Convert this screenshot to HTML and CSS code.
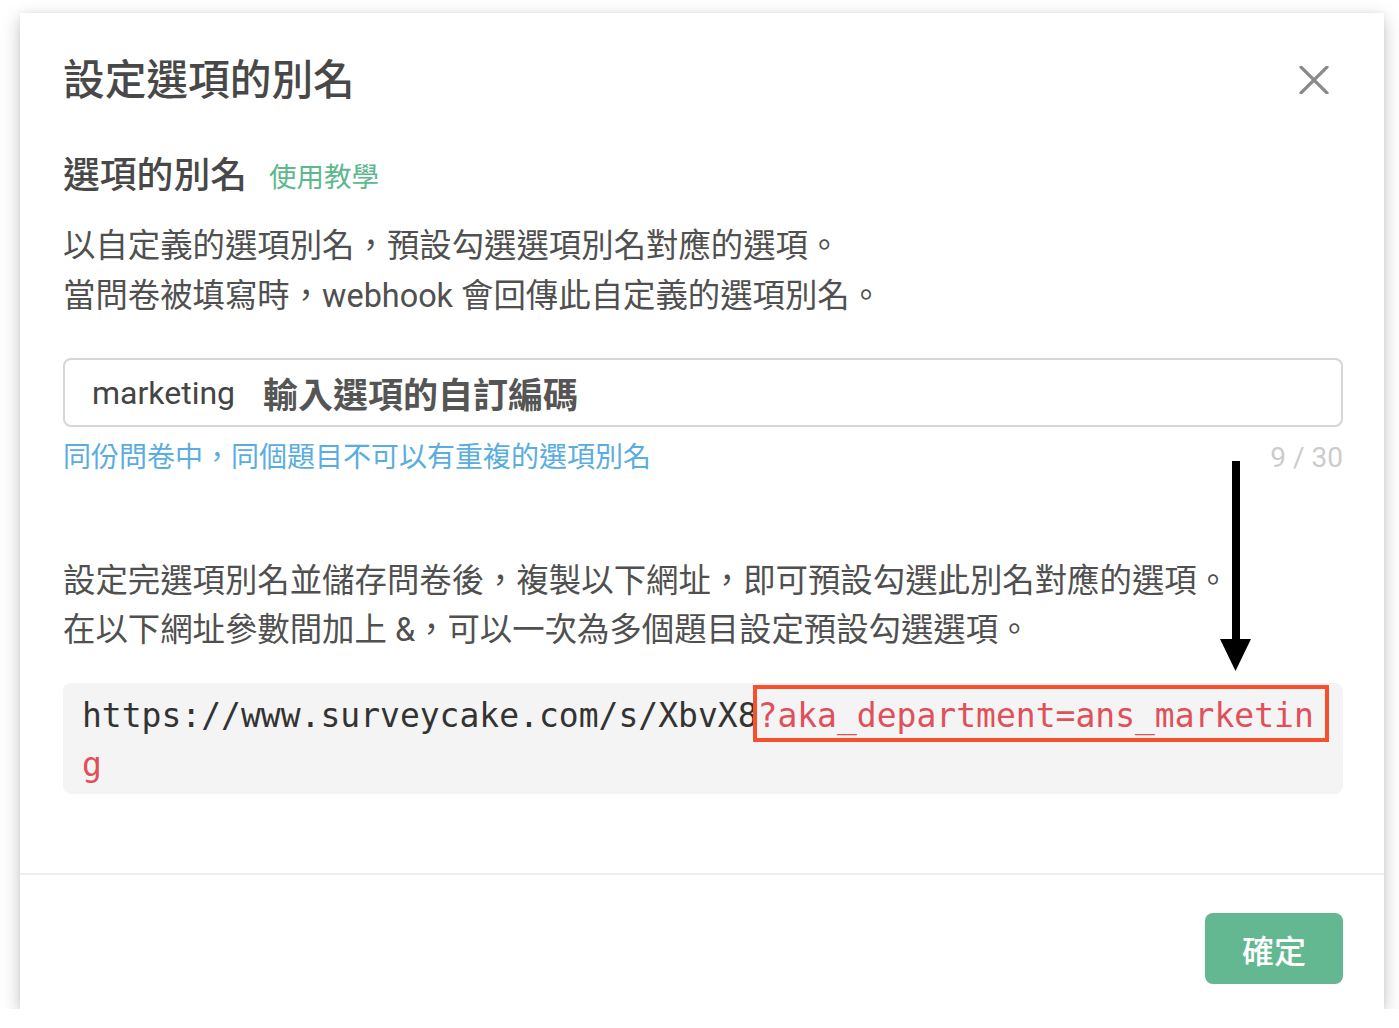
FILE: index.html
```html
<!DOCTYPE html>
<html lang="zh-Hant">
<head>
<meta charset="utf-8">
<link rel="stylesheet" href="styles.css">
</head>
<body>
<div class="modal">
  <div class="modal-body">
    <div class="header">
      <h1 class="title">設定選項的別名</h1>
      <button class="close" aria-label="close">
        <svg width="30" height="28" viewBox="0 0 30 28"><path d="M2 1 L28 27 M28 1 L2 27" stroke="#8a8a8a" stroke-width="3.2" stroke-linecap="round" fill="none"/></svg>
      </button>
    </div>
    <div class="subtitle">選項的別名<a class="tutorial">使用教學</a></div>
    <p class="desc">以自定義的選項別名，預設勾選選項別名對應的選項。<br>當問卷被填寫時，webhook 會回傳此自定義的選項別名。</p>
    <div class="input"><span class="value">marketing</span><span class="note">輸入選項的自訂編碼</span></div>
    <div class="hint-row"><span class="hint">同份問卷中，同個題目不可以有重複的選項別名</span><span class="count">9 / 30</span></div>
    <p class="desc desc2">設定完選項別名並儲存問卷後，複製以下網址，即可預設勾選此別名對應的選項。<br>在以下網址參數間加上 &amp;，可以一次為多個題目設定預設勾選選項。</p>
    <div class="code"><span class="base">https://www.surveycake.com/s/XbvX8</span><span class="param">?aka_department=ans_marketin</span><span class="param">g</span><div class="highlight"></div></div>
    <svg class="arrow" width="32" height="210" viewBox="0 0 32 210"><rect x="12" y="0" width="8" height="182" fill="#000"/><path d="M0 178 L31 178 L15.5 210 Z" fill="#000"/></svg>
  </div>
  <div class="footer">
    <button class="ok">確定</button>
  </div>
</div>
</body>
</html>
```
FILE: styles.css
```css
html, body {
  margin: 0;
  padding: 0;
  background: #ffffff;
}
body {
  font-family: Roboto, "Noto Sans CJK TC", "Noto Sans", sans-serif;
  color: #4a4a4a;
}
.modal {
  margin: 13px 0 0 20px;
  width: 1364px;
  background: #fff;
  box-shadow: 0 6px 18px rgba(0,0,0,0.22), 0 0 6px rgba(0,0,0,0.06);
}
.modal-body {
  position: relative;
  padding: 40px 41px 79px 43px;
  border-bottom: 2px solid #eeeeee;
}
.header {
  display: flex;
  justify-content: space-between;
  align-items: center;
}
.title {
  margin: 0;
  font-size: 41.7px;
  line-height: 56px;
  font-weight: 500;
  color: #484848;
}
.close {
  border: 0;
  background: none;
  padding: 0;
  margin-right: 14px;
  margin-top: -2px;
  display: flex;
}
.subtitle {
  margin-top: 40px;
  font-size: 36.8px;
  line-height: 50px;
  font-weight: 500;
  color: #484848;
  display: flex;
  align-items: center;
}
.tutorial {
  margin-left: 22px;
  font-size: 27.5px;
  color: #5db88e;
  font-weight: 400;
  padding-top: 4px;
}
.desc {
  margin: 18px 0 0;
  font-size: 32.4px;
  line-height: 50px;
  color: #505050;
}
.input {
  margin-top: 37px;
  height: 65px;
  border: 2px solid #d6d6d6;
  border-radius: 8px;
  display: flex;
  align-items: center;
  padding: 0 28px 0 27px;
}
.value {
  font-size: 32px;
  color: #444;
}
.note {
  margin-left: 28px;
  font-size: 35px;
  font-weight: 700;
  color: #555;
}
.hint-row {
  margin-top: 11px;
  display: flex;
  justify-content: space-between;
  font-size: 28px;
  line-height: 40px;
}
.hint { color: #5aade0; }
.count { color: #cccccc; }
.desc2 {
  margin-top: 79px;
  line-height: 49px;
}
.code {
  position: relative;
  margin-top: 28px;
  background: #f4f4f4;
  border-radius: 8px;
  padding: 8px 19px 5px 19px;
  font-family: "DejaVu Sans Mono", monospace;
  font-size: 33px;
  line-height: 49px;
  color: #333;
  word-break: break-all;
}
.param { color: #e0505a; }
.highlight {
  position: absolute;
  left: 690px;
  top: 2px;
  width: 568px;
  height: 49px;
  border: 4px solid #f7502c;
}
.arrow {
  position: absolute;
  left: 1200px;
  top: 448px;
}
.footer {
  display: flex;
  justify-content: flex-end;
  padding: 38px 41px 25px 0;
}
.ok {
  width: 138px;
  height: 71px;
  border: 0;
  border-radius: 8px;
  background: #63b892;
  color: #fff;
  font-family: "Noto Sans CJK TC", sans-serif;
  font-size: 32px;
  font-weight: 500;
}
```
